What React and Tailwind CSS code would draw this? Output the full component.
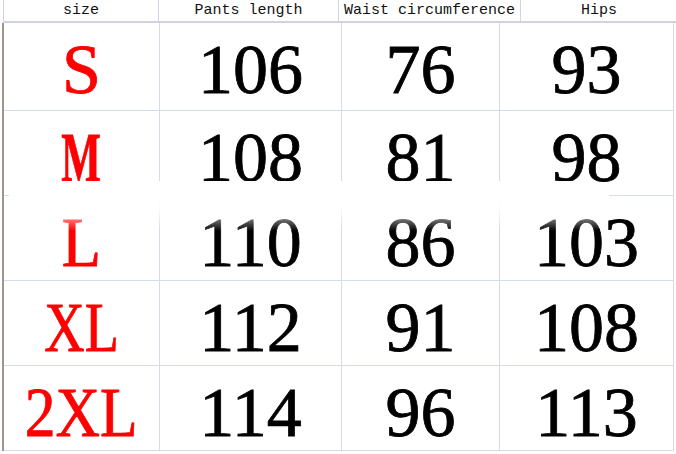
const rows = [
  { size: "S", fit: "", vals: ["106", "76", "93"], h: "h-[88px]" },
  { size: "M", fit: "font-bold scale-x-[0.6]", vals: ["108", "81", "98"], h: "h-[85px]" },
  { size: "L", fit: "scale-x-[0.92]", vals: ["110", "86", "103"], h: "h-[85px]" },
  { size: "XL", fit: "scale-x-[0.8]", vals: ["112", "91", "108"], h: "h-[85px]" },
  { size: "2XL", fit: "scale-x-[0.88]", vals: ["114", "96", "113"], h: "h-[85px]" },
];

const headers = [
  { label: "size", w: "w-[155px]" },
  { label: "Pants length", w: "w-[180px]" },
  { label: "Waist circumference", w: "w-[182px]" },
  { label: "Hips", w: "w-[156px]" },
];

function Cell({ children, w, className = "" }) {
  return (
    <div
      className={`${w} shrink-0 border-r border-[#d5dbea] flex justify-center pt-[12px] text-[70px] leading-[70px] [-webkit-text-stroke-width:0.8px] [font-family:'Liberation_Serif',serif] ${className}`}
    >
      {children}
    </div>
  );
}

export default function App() {
  return (
    <div className="relative w-[676px] h-[454px] bg-white overflow-hidden">
      <div className="flex h-[23px] border-b-2 border-[#cbd3e5] ml-[3px] border-l border-l-[#cdd5e6]">
        {headers.map((h, i) => (
          <div
            key={h.label}
            className={`${h.w} shrink-0 flex items-center justify-center text-[15px] leading-none text-[#111] [font-family:'Liberation_Mono',monospace] ${i < 3 ? "border-r border-[#cdd5e6]" : ""}`}
          >
            {h.label}
          </div>
        ))}
      </div>
      <div className="ml-[2px] w-[672px] border-l-2 border-[#9d958e]">
        {rows.map((r) => (
          <div key={r.size} className={`flex ${r.h} border-b border-[#d5dbea]`}>
            <Cell w="w-[156px]" className="text-[#ff0000]">
              <span className={`inline-block ${r.fit}`}>{r.size}</span>
            </Cell>
            <Cell w="w-[182px]" className="text-black">{r.vals[0]}</Cell>
            <Cell w="w-[158px]" className="text-black">{r.vals[1]}</Cell>
            <Cell w="w-[174px]" className="text-black">{r.vals[2]}</Cell>
          </div>
        ))}
      </div>
      {/* smeared watermark patch over the L row */}
      <div className="absolute left-[8px] top-[181px] w-[602px] h-[50px] rounded-[20px] bg-gradient-to-b from-white via-white/95 to-white/0" />
    </div>
  );
}
